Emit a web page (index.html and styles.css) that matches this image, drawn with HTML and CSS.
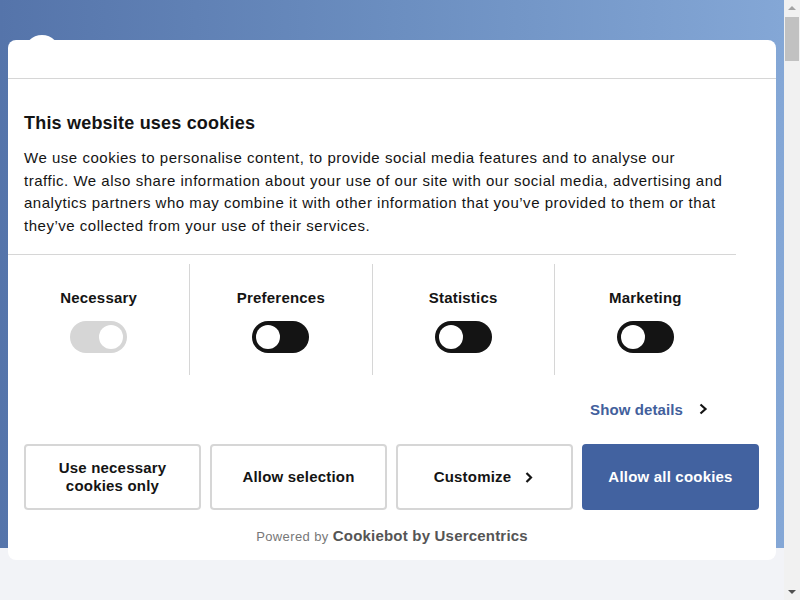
FILE: index.html
```html
<!DOCTYPE html>
<html lang="en">
<head>
<meta charset="utf-8">
<title>Cookie consent</title>
<link rel="stylesheet" href="styles.css">
</head>
<body>
<div class="page">
  <div class="hero">
    <div class="logo"></div>
  </div>
  <div class="rest"></div>

  <div class="dialog" role="dialog">
    <div class="dialog-header"></div>
    <div class="dialog-scroll">
      <h2 class="title">This website uses cookies</h2>
      <p class="text">We use cookies to personalise content, to provide social media features and to analyse our traffic. We also share information about your use of our site with our social media, advertising and analytics partners who may combine it with other information that you’ve provided to them or that they’ve collected from your use of their services.</p>
      <div class="divider"></div>
      <div class="toggles">
        <div class="toggle-col">
          <div class="toggle-label">Necessary</div>
          <div class="switch switch-disabled"><span class="knob"></span></div>
        </div>
        <div class="toggle-col">
          <div class="toggle-label">Preferences</div>
          <div class="switch"><span class="knob"></span></div>
        </div>
        <div class="toggle-col">
          <div class="toggle-label">Statistics</div>
          <div class="switch"><span class="knob"></span></div>
        </div>
        <div class="toggle-col">
          <div class="toggle-label">Marketing</div>
          <div class="switch"><span class="knob"></span></div>
        </div>
      </div>
      <div class="details-row">
        <span class="details-link">Show details</span>
        <svg class="chev chev-details" width="12" height="14" viewBox="0 0 12 14"><path d="M3.5 2.5 L8.5 7 L3.5 11.5" fill="none" stroke="#141414" stroke-width="2.2"/></svg>
      </div>
    </div>
    <div class="buttons">
      <div class="btn">Use necessary<br>cookies only</div>
      <div class="btn">Allow selection</div>
      <div class="btn">Customize <svg class="chev chev-btn" width="12" height="14" viewBox="0 0 12 14"><path d="M3.5 3 L8 7.5 L3.5 12" fill="none" stroke="#141414" stroke-width="2.2"/></svg></div>
      <div class="btn btn-primary">Allow all cookies</div>
    </div>
    <div class="powered">Powered by <strong>Cookiebot by Usercentrics</strong></div>
  </div>
</div>
<div class="scrollbar">
  <div class="sb-arrow sb-up"></div>
  <div class="sb-thumb"></div>
  <div class="sb-track"></div>
  <div class="sb-arrow sb-down"></div>
</div>
</body>
</html>
```
FILE: styles.css
```css
html, body {
  margin: 0;
  padding: 0;
  height: 600px;
  overflow: hidden;
}
body {
  display: flex;
  font-family: "Liberation Sans", Arial, sans-serif;
  color: #141414;
}
.page {
  position: relative;
  width: 784px;
  height: 600px;
  display: flex;
  flex-direction: column;
}
.hero {
  height: 548px;
  background: linear-gradient(90deg, #5574aa 0%, #6b8ec0 50%, #84a7d6 100%);
  padding: 35px 0 0 24px;
  box-sizing: border-box;
}
.logo {
  width: 36px;
  height: 36px;
  border-radius: 50%;
  background: #fff;
}
.rest {
  flex: 1;
  background: #f2f3f7;
}
.dialog {
  position: absolute;
  left: 8px;
  top: 40px;
  width: 768px;
  height: 520px;
  background: #fff;
  border-radius: 8px;
  display: flex;
  flex-direction: column;
}
.dialog-header {
  height: 38px;
  border-bottom: 1px solid #d6d6d6;
  flex: none;
}
.dialog-scroll {
  width: 728px;
  padding-top: 32px;
}
.title {
  margin: 0 16px;
  font-size: 18px;
  line-height: 24px;
  font-weight: 700;
  letter-spacing: 0.2px;
}
.text {
  margin: 12px 12px 0 16px;
  font-size: 15px;
  line-height: 22.5px;
  letter-spacing: 0.52px;
}
.divider {
  margin-top: 17px;
  border-top: 1px solid #d6d6d6;
}
.toggles {
  display: flex;
  padding-top: 9px;
}
.toggle-col {
  flex: 1;
  height: 111px;
  display: flex;
  flex-direction: column;
  align-items: center;
  padding-top: 24px;
  box-sizing: border-box;
}
.toggle-col + .toggle-col {
  border-left: 1px solid #d6d6d6;
}
.toggle-label {
  font-size: 15px;
  line-height: 20px;
  font-weight: 700;
  letter-spacing: 0.2px;
}
.switch {
  margin-top: 13px;
  width: 57px;
  height: 32px;
  border-radius: 16px;
  background: #141414;
  display: flex;
  align-items: center;
  padding: 0 4px;
  box-sizing: border-box;
}
.knob {
  width: 24px;
  height: 24px;
  border-radius: 50%;
  background: #fff;
}
.switch-disabled {
  background: #d6d6d6;
  justify-content: flex-end;
}
.details-row {
  margin-top: 24px;
  display: flex;
  justify-content: flex-end;
  align-items: center;
  padding-right: 27px;
  height: 20px;
}
.details-link {
  font-size: 15px;
  font-weight: 700;
  color: #42609c;
  letter-spacing: 0.1px;
}
.chev-details {
  margin-left: 14px;
}
.buttons {
  display: flex;
  gap: 9px;
  padding: 0 17px 0 16px;
  margin-top: 25px;
}
.btn {
  flex: 1;
  height: 66px;
  box-sizing: border-box;
  border: 2px solid #d6d6d6;
  border-radius: 4px;
  display: flex;
  align-items: center;
  justify-content: center;
  text-align: center;
  font-size: 15px;
  line-height: 18px;
  font-weight: 700;
  letter-spacing: 0.2px;
}
.chev-btn {
  margin-left: 12px;
}
.btn-primary {
  background: #4262a0;
  border-color: #4262a0;
  color: #fff;
}
.powered {
  margin-top: 16px;
  text-align: center;
  font-size: 13px;
  line-height: 20px;
  color: #777;
  letter-spacing: 0.4px;
}
.powered strong {
  font-size: 15px;
  color: #555;
  letter-spacing: 0.2px;
}
.scrollbar {
  width: 16px;
  height: 600px;
  background: #f1f1f1;
  display: flex;
  flex-direction: column;
  align-items: center;
}
.sb-arrow {
  height: 17px;
  width: 16px;
  position: relative;
}
.sb-up::after, .sb-down::after {
  content: "";
  position: absolute;
  left: 4px;
  border-left: 4px solid transparent;
  border-right: 4px solid transparent;
}
.sb-up::after {
  top: 6px;
  border-bottom: 4px solid #a3a3a3;
}
.sb-down::after {
  top: 7px;
  border-top: 4px solid #505050;
}
.sb-thumb {
  width: 14px;
  height: 44px;
  background: #c1c1c1;
}
.sb-track {
  flex: 1;
}
```
